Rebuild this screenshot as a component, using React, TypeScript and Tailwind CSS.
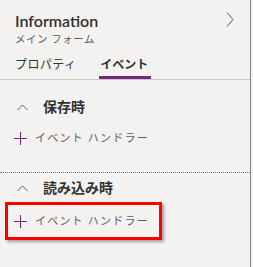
import React from "react";

const font = { fontFamily: '"Noto Sans", "Noto Sans CJK JP", sans-serif' };

function ChevronUp() {
  return (
    <svg width="11" height="7" viewBox="0 0 11 7" className="block">
      <path d="M0.5 6 L5.5 1 L10.5 6" fill="none" stroke="#605e5c" strokeWidth="1" />
    </svg>
  );
}

function Plus() {
  return (
    <svg width="13" height="13" viewBox="0 0 13 13" className="block">
      <path d="M0 6.5 H13 M6.5 0 V13" fill="none" stroke="#742774" strokeWidth="1" />
    </svg>
  );
}

function AddRow() {
  return (
    <div className="flex items-center h-[20px]">
      <div className="ml-[14px]">
        <Plus />
      </div>
      <span className="ml-[8px] text-[11px] text-[#605e5c] leading-[20px] tracking-[1.2px]">イベント ハンドラー</span>
    </div>
  );
}

export default function App() {
  return (
    <div className="w-[253px] h-[267px] bg-[#f3f2f1] flex" style={font}>
      <div className="w-[251px] h-full border-r border-[#8a8886] flex flex-col">
        <div className="relative pt-[11px] pl-[15px]">
          <div className="text-[16px] font-semibold text-[#323130] leading-[20px] h-[20px]" style={{ fontFamily: '"Lato", sans-serif' }}>Information</div>
          <div className="text-[10.5px] text-[#605e5c] leading-[14px] mt-[1px] tracking-[0.5px]">メイン フォーム</div>
          <svg width="8" height="15" viewBox="0 0 8 15" className="absolute left-[226px] top-[12px]">
            <path d="M1 0.5 L7 7.5 L1 14.5" fill="none" stroke="#605e5c" strokeWidth="1" />
          </svg>
        </div>
        <div className="mt-[10px] flex pl-[15px] border-b border-[#c8c6c4] h-[24px]">
          <div className="text-[12px] text-[#323130] leading-[16px] pt-[1px] tracking-[0.4px]">プロパティ</div>
          <div className="ml-[23px] relative">
            <div className="text-[12px] font-bold text-[#323130] leading-[16px] pt-[1px] px-[1px]">イベント</div>
            <div className="absolute left-0 right-[-2px] bottom-0 h-[3px] bg-[#742774]"></div>
          </div>
        </div>
        <div className="pt-[17px]">
          <div className="flex items-center h-[20px]">
            <div className="ml-[17px]"><ChevronUp /></div>
            <span className="ml-[15px] text-[14px] font-semibold text-[#323130] leading-[20px]">保存時</span>
          </div>
          <div className="mt-[11px]">
            <AddRow />
          </div>
        </div>
        <div className="mt-[24px] border-t border-dotted border-[#00a3a3]"></div>
        <div className="pt-[5px]">
          <div className="flex items-center h-[20px]">
            <div className="ml-[17px]"><ChevronUp /></div>
            <span className="ml-[15px] text-[14px] font-semibold text-[#323130] leading-[20px]">読み込み時</span>
          </div>
          <div className="mt-[4px] ml-[5px] w-[157px] h-[38px] border-[3px] border-[#ff0000] shadow-[2px_2px_3px_rgba(0,0,0,0.35)] flex items-center">
            <div className="ml-[-8px] w-full">
              <AddRow />
            </div>
          </div>
        </div>
      </div>
    </div>
  );
}
